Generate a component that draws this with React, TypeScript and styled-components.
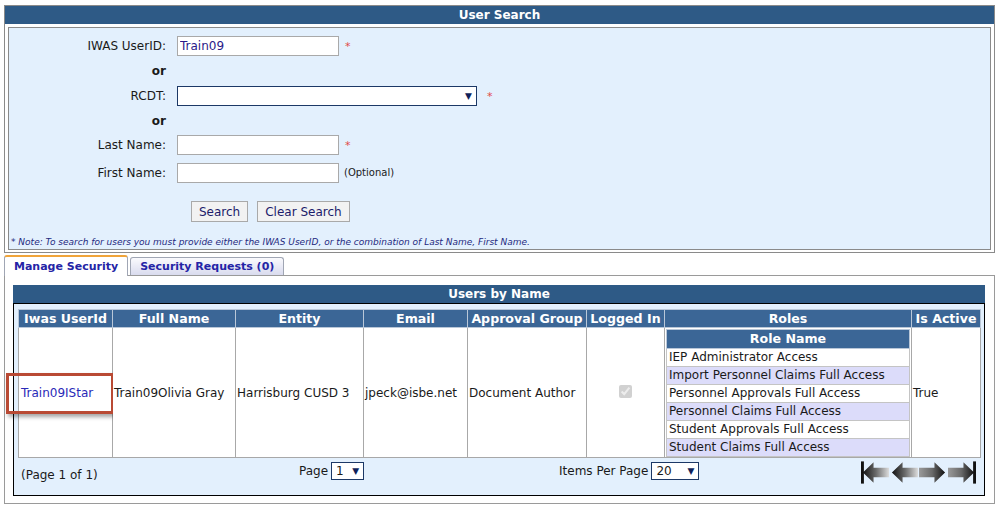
import styled, { createGlobalStyle } from "styled-components";

const GlobalStyle = createGlobalStyle`
  html, body {
    margin: 0;
    padding: 0;
    background: #fff;
    font-family: "DejaVu Sans", Verdana, sans-serif;
    font-size: 12px;
    color: #1a1a1a;
  }
`;

const Page = styled.div`
  width: 996px;
  height: 505px;
  padding: 5px 1px 0 4px;
  box-sizing: border-box;
  display: flex;
  flex-direction: column;
`;

const Panel = styled.section`
  border: 1px solid #8a8a8a;
  display: flex;
  flex-direction: column;
`;

const PanelTitle = styled.div`
  background: #2e5a86;
  color: #fff;
  font-weight: bold;
  font-size: 12px;
  text-align: center;
  height: 18px;
  line-height: 18px;
`;

const SearchBox = styled.div`
  margin: 3px 3px 2px 3px;
  background: #e3f0fd;
  border: 1px solid #8a8a8a;
  padding-top: 8px;
  height: 223px;
  box-sizing: border-box;
  display: flex;
  flex-direction: column;
`;

const FormRow = styled.div<{ $h: number; $mt?: number }>`
  display: grid;
  grid-template-columns: 157px 1fr;
  column-gap: 11px;
  align-items: center;
  height: ${(p) => p.$h}px;
  margin-top: ${(p) => p.$mt ?? 0}px;
`;

const Label = styled.label<{ $bold?: boolean }>`
  text-align: right;
  font-weight: ${(p) => (p.$bold ? "bold" : "normal")};
`;

const Field = styled.div`
  display: flex;
  align-items: center;
`;

const TextInput = styled.input`
  width: 162px;
  height: 20px;
  box-sizing: border-box;
  border: 1px solid #a9a9a9;
  background: #fff;
  font-family: inherit;
  font-size: 12px;
  color: #2a1a8a;
  padding: 0 2px;
  margin: 0;
  outline: none;
`;

const SelectBox = styled.div<{ $w: number; $h: number }>`
  width: ${(p) => p.$w}px;
  height: ${(p) => p.$h}px;
  box-sizing: border-box;
  border: 1px solid #1c3866;
  background: #fff;
  display: flex;
  align-items: center;
  justify-content: space-between;
  padding: 0 4px 0 4px;
  font-size: 12px;
`;

const Caret = styled.span`
  font-size: 9px;
  color: #0f1f5a;
`;

const Required = styled.span<{ $ml: number }>`
  color: #e04848;
  font-size: 11px;
  margin-left: ${(p) => p.$ml}px;
`;

const Hint = styled.span`
  font-size: 10px;
  margin-left: 5px;
`;

const Button = styled.button`
  height: 21px;
  box-sizing: border-box;
  border: 1px solid #a9a9a9;
  background: #f2f2f2;
  color: #1b1b6a;
  font-family: inherit;
  font-size: 12px;
  padding: 0 7px;
  margin: 0 9px 0 0;
`;

const Buttons = styled.div`
  display: flex;
  margin-left: 14px;
`;

const Note = styled.div`
  margin-top: auto;
  margin-bottom: 2px;
  padding-left: 2px;
  font-size: 9px;
  font-style: italic;
  color: #1f2a80;
`;

const Tabs = styled.div`
  display: flex;
  align-items: flex-end;
  height: 21px;
  margin-top: 1px;
  gap: 2px;
`;

const Tab = styled.div<{ $active?: boolean }>`
  height: ${(p) => (p.$active ? "21px" : "18px")};
  box-sizing: border-box;
  padding: 0 9px;
  display: flex;
  align-items: center;
  font-size: 11px;
  font-weight: bold;
  color: #2424a6;
  border: 1px solid #a0a6b4;
  border-bottom: none;
  border-radius: 3px 3px 0 0;
  background: ${(p) =>
    p.$active ? "#fff" : "linear-gradient(#fafafd, #d9dbee)"};
  border-top: ${(p) => (p.$active ? "2px solid #f0a43a" : "1px solid #a0a6b4")};
  position: relative;
  margin-bottom: ${(p) => (p.$active ? "-1px" : "0")};
  z-index: ${(p) => (p.$active ? 1 : 0)};
`;

const TabBody = styled.div`
  border: 1px solid #9a9a9a;
  flex: 1;
  padding: 9px 9px 7px 8px;
  box-sizing: border-box;
  display: flex;
  flex-direction: column;
  margin-bottom: 1px;
`;

const GridBox = styled.div`
  border: 1px solid #000;
  background: #e3f0fd;
  padding: 5px 4px 0 4px;
  flex: 1;
  display: flex;
  flex-direction: column;
`;

const Table = styled.table`
  border-collapse: collapse;
  width: 962px;
  table-layout: fixed;
`;

const Th = styled.th<{ $w: number }>`
  width: ${(p) => p.$w}px;
  background: #3b6696;
  color: #fff;
  font-weight: bold;
  font-size: 12.6px;
  height: 17px;
  padding: 0;
  border: 1px solid #b9c7d8;
  text-align: center;
  white-space: nowrap;
  overflow: hidden;
`;

const Td = styled.td<{ $center?: boolean; $pad?: number }>`
  background: #fff;
  border: 1px solid #a8a8a8;
  height: 129px;
  padding: 0 ${(p) => p.$pad ?? 1}px;
  vertical-align: middle;
  text-align: ${(p) => (p.$center ? "center" : "left")};
  white-space: nowrap;
  position: relative;
`;

const UserLink = styled.a`
  color: #2a2ab8;
  text-decoration: none;
  padding-left: 1px;
`;

const Highlight = styled.div`
  position: absolute;
  left: -13px;
  top: calc(50% - 20px);
  width: 108px;
  height: 41px;
  box-sizing: border-box;
  border: 3px solid #b94a34;
  box-shadow: 2px 3px 4px rgba(0, 0, 0, 0.35);
  pointer-events: none;
`;

const RoleTable = styled.table`
  border-collapse: collapse;
  width: 100%;
`;

const RoleTh = styled.th`
  background: #3b6696;
  color: #fff;
  font-weight: bold;
  font-size: 12.6px;
  height: 18px;
  padding: 0;
  text-align: center;
  border: 1px solid #b9c7d8;
`;

const RoleTd = styled.td<{ $alt: boolean }>`
  background: ${(p) => (p.$alt ? "#dcdcfa" : "#fff")};
  border: 1px solid #c4c4c4;
  height: 17px;
  padding: 0 2px;
  font-size: 12px;
  color: #1a1a1a;
`;

const Check = styled.input`
  margin: 0;
  width: 13px;
  height: 13px;
`;

const Footer = styled.div`
  height: 36px;
  display: grid;
  grid-template-columns: 281px 260px 1fr auto;
  align-items: center;
  padding-right: 4px;
`;

const PageInfo = styled.span`
  padding-left: 3px;
  margin-top: -3px;
`;

const Pager = styled.div`
  display: flex;
  align-items: center;
  gap: 3px;
  margin-top: -11px;
`;

const NavIcons = styled.div`
  display: flex;
  gap: 1px;
  margin-top: -7px;
`;

const columns: [string, number][] = [
  ["Iwas UserId", 93],
  ["Full Name", 122],
  ["Entity", 127],
  ["Email", 103],
  ["Approval Group", 118],
  ["Logged In", 77],
  ["Roles", 246],
  ["Is Active", 68],
];

const roles = [
  "IEP Administrator Access",
  "Import Personnel Claims Full Access",
  "Personnel Approvals Full Access",
  "Personnel Claims Full Access",
  "Student Approvals Full Access",
  "Student Claims Full Access",
];

function NavArrow({ dir, bar }: { dir: "left" | "right"; bar?: boolean }) {
  const id = `g-${dir}-${bar ? "b" : "n"}`;
  const left = dir === "left";
  const arrow = left
    ? "M2 12.5 L13 2 L13 7.5 L29 7.5 L29 17.5 L13 17.5 L13 23 Z"
    : "M27 12.5 L16 2 L16 7.5 L0 7.5 L0 17.5 L16 17.5 L16 23 Z";
  return (
    <svg width="28" height="25" viewBox="0 0 29 25">
      <defs>
        <linearGradient id={id} x1="0" y1="0" x2="1" y2="0">
          <stop offset="0" stopColor={left ? "#111" : "#9a9a9a"} />
          <stop offset="0.5" stopColor="#6a6a6a" />
          <stop offset="1" stopColor={left ? "#dcdcdc" : "#111"} />
        </linearGradient>
      </defs>
      <path d={arrow} fill={`url(#${id})`} />
      {bar && (
        <rect x={left ? 0 : 26} y="1" width="3" height="23" fill="#111" />
      )}
    </svg>
  );
}

export default function App() {
  return (
    <>
      <GlobalStyle />
      <Page>
        <Panel>
          <PanelTitle>User Search</PanelTitle>
          <SearchBox>
            <FormRow $h={20}>
              <Label>IWAS UserID:</Label>
              <Field>
                <TextInput defaultValue="Train09" />
                <Required $ml={6}>*</Required>
              </Field>
            </FormRow>
            <FormRow $h={30}>
              <Label $bold>or</Label>
            </FormRow>
            <FormRow $h={20}>
              <Label>RCDT:</Label>
              <Field>
                <SelectBox $w={300} $h={20}>
                  <span />
                  <Caret>▼</Caret>
                </SelectBox>
                <Required $ml={10}>*</Required>
              </Field>
            </FormRow>
            <FormRow $h={29}>
              <Label $bold>or</Label>
            </FormRow>
            <FormRow $h={20}>
              <Label>Last Name:</Label>
              <Field>
                <TextInput />
                <Required $ml={6}>*</Required>
              </Field>
            </FormRow>
            <FormRow $h={21} $mt={7}>
              <Label>First Name:</Label>
              <Field>
                <TextInput />
                <Hint>(Optional)</Hint>
              </Field>
            </FormRow>
            <FormRow $h={21} $mt={18}>
              <span />
              <Buttons>
                <Button>Search</Button>
                <Button>Clear Search</Button>
              </Buttons>
            </FormRow>
            <Note>
              * Note: To search for users you must provide either the IWAS
              UserID, or the combination of Last Name, First Name.
            </Note>
          </SearchBox>
        </Panel>

        <Tabs>
          <Tab $active>Manage Security</Tab>
          <Tab>Security Requests (0)</Tab>
        </Tabs>
        <TabBody>
          <PanelTitle>Users by Name</PanelTitle>
          <GridBox>
            <Table>
              <thead>
                <tr>
                  {columns.map(([name, w]) => (
                    <Th key={name} $w={w}>
                      {name}
                    </Th>
                  ))}
                </tr>
              </thead>
              <tbody>
                <tr>
                  <Td>
                    <UserLink href="#">Train09IStar</UserLink>
                    <Highlight />
                  </Td>
                  <Td>Train09Olivia Gray</Td>
                  <Td>Harrisburg CUSD 3</Td>
                  <Td>jpeck@isbe.net</Td>
                  <Td>Document Author</Td>
                  <Td $center>
                    <Check type="checkbox" checked disabled readOnly />
                  </Td>
                  <Td $pad={1}>
                    <RoleTable>
                      <thead>
                        <tr>
                          <RoleTh>Role Name</RoleTh>
                        </tr>
                      </thead>
                      <tbody>
                        {roles.map((r, i) => (
                          <tr key={r}>
                            <RoleTd $alt={i % 2 === 1}>{r}</RoleTd>
                          </tr>
                        ))}
                      </tbody>
                    </RoleTable>
                  </Td>
                  <Td>True</Td>
                </tr>
              </tbody>
            </Table>
            <Footer>
              <PageInfo>(Page 1 of 1)</PageInfo>
              <Pager>
                Page
                <SelectBox $w={33} $h={18}>
                  1 <Caret>▼</Caret>
                </SelectBox>
              </Pager>
              <Pager>
                Items Per Page
                <SelectBox $w={48} $h={18}>
                  20 <Caret>▼</Caret>
                </SelectBox>
              </Pager>
              <NavIcons>
                <NavArrow dir="left" bar />
                <NavArrow dir="left" />
                <NavArrow dir="right" />
                <NavArrow dir="right" bar />
              </NavIcons>
            </Footer>
          </GridBox>
        </TabBody>
      </Page>
    </>
  );
}
